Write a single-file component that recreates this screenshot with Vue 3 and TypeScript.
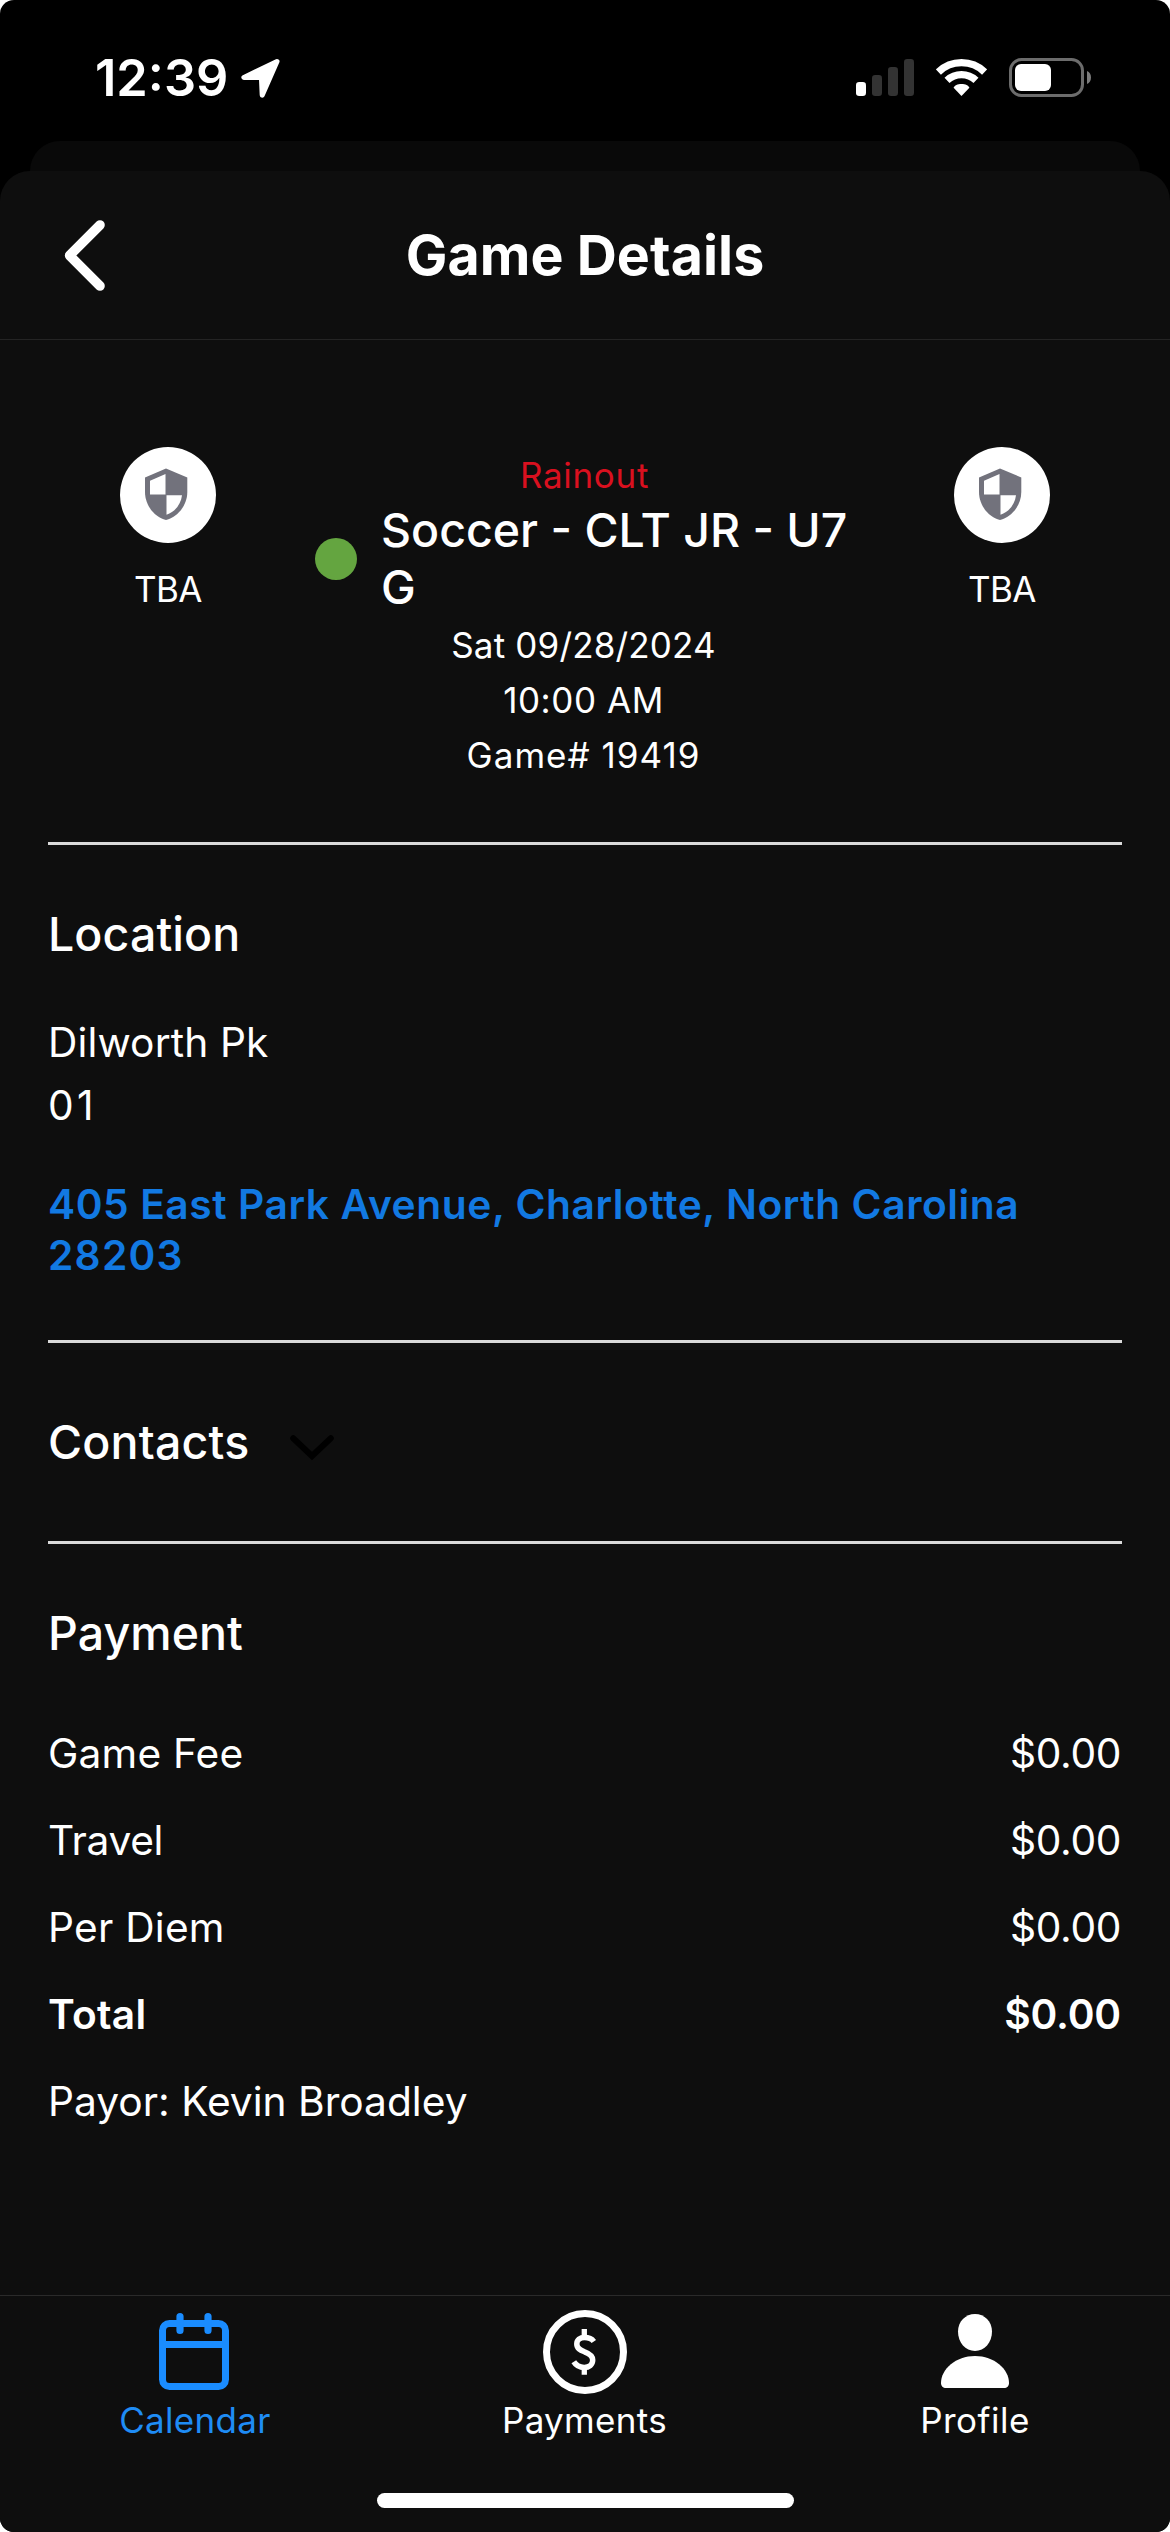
<script setup lang="ts">
interface Fee {
  label: string
  amount: string
  total?: boolean
  tracking: string
}

const fees: Fee[] = [
  { label: 'Game Fee', amount: '$0.00', tracking: '0.18px' },
  { label: 'Travel', amount: '$0.00', tracking: '-0.34px' },
  { label: 'Per Diem', amount: '$0.00', tracking: '0.24px' },
  { label: 'Total', amount: '$0.00', total: true, tracking: '0.25px' },
]

const signalBars = [
  { x: 0, h: 14, on: true },
  { x: 16, h: 21, on: false },
  { x: 32, h: 29, on: false },
  { x: 48, h: 37, on: false },
]
</script>

<template>
  <div class="phone">
    <div class="status">
      <div class="clock">
        <span class="time">12:39</span>
        <svg class="arrow" width="39" height="39" viewBox="0 0 39 39">
          <path d="M36 2.6 2.9 18.4H20.4L21.2 36.2Z" fill="#fff" stroke="#fff" stroke-width="5" stroke-linejoin="round" />
        </svg>
      </div>
      <div class="indicators">
        <svg width="58" height="37" viewBox="0 0 58 37">
          <rect
            v-for="bar in signalBars"
            :key="bar.x"
            :x="bar.x"
            :y="37 - bar.h"
            width="10"
            :height="bar.h"
            rx="3.2"
            :fill="bar.on ? '#fff' : '#333'"
          />
        </svg>
        <svg width="51" height="37" viewBox="0 0 51 37">
          <g fill="none" stroke="#fff" stroke-width="7.3">
            <path d="M2.4 13A33.3 33.3 0 0 1 48.6 13" />
            <path d="M11 21.4A21.3 21.3 0 0 1 40 21.4" />
          </g>
          <path d="M25.5 37 17.6 28.8C18.4 26.4 21.6 25 25.5 25S32.600 26.400 33.400 28.800Z" fill="#fff" />
        </svg>
        <svg width="82" height="39" viewBox="0 0 82 39">
          <rect x="1.5" y="1.500" width="72" height="36" rx="11" fill="none" stroke="#6c6c6c" stroke-width="3" />
          <rect x="6" y="6" width="36" height="27" rx="6" fill="#fff" />
          <path d="M78 13C80.600 14 82 16.500 82 19.500S80.600 25 78 26Z" fill="#7c7c7c" />
        </svg>
      </div>
    </div>

    <div class="sheet-behind"></div>

    <main class="sheet">
      <header class="header">
        <svg class="back" width="41" height="71" viewBox="0 0 41 71">
          <path d="M36 5 5.600 35.500 36 66" fill="none" stroke="#fff" stroke-width="9.600" stroke-linecap="round" stroke-linejoin="round" />
        </svg>
        <h1 class="title">Game Details</h1>
      </header>

      <div class="content">
        <section class="summary">
          <div class="team">
            <svg class="crest" width="96" height="96" viewBox="0 0 96 96">
              <circle cx="48" cy="48" r="48" fill="#fff" />
              <path d="M46 21.500 67.300 30.500V45C67.300 58 58 70 46 73 34 70 25 58 25 45V30.500Z" fill="#72727c" />
              <path d="M45.500 27 30 33.700V47.500H45.500ZM46.500 48.200H62C61 57 55 65 46.500 67.800Z" fill="#fff" />
            </svg>
            <span class="team-name">TBA</span>
          </div>

          <div class="match">
            <span class="state">Rainout</span>
            <div class="league">
              <i class="dot"></i>
              <span class="league-name">Soccer - CLT JR - U7 G</span>
            </div>
            <span class="line date">Sat 09/28/2024</span>
            <span class="line hour">10:00 AM</span>
            <span class="line number">Game# 19419</span>
          </div>

          <div class="team">
            <svg class="crest" width="96" height="96" viewBox="0 0 96 96">
              <circle cx="48" cy="48" r="48" fill="#fff" />
              <path d="M46 21.500 67.300 30.500V45C67.300 58 58 70 46 73 34 70 25 58 25 45V30.500Z" fill="#72727c" />
              <path d="M45.500 27 30 33.700V47.500H45.500ZM46.500 48.200H62C61 57 55 65 46.500 67.800Z" fill="#fff" />
            </svg>
            <span class="team-name">TBA</span>
          </div>
        </section>

        <section class="location">
          <h2>Location</h2>
          <p class="venue">Dilworth Pk</p>
          <p class="field">01</p>
          <a class="address">405 East Park Avenue, Charlotte, North Carolina <span class="zip">28203</span></a>
        </section>

        <section class="contacts">
          <h2 class="contacts-title">Contacts</h2>
          <svg class="expand" width="44" height="26" viewBox="0 0 44 26">
            <path d="M3.200 3.200 22 21 40.800 3.200" fill="none" stroke="#000" stroke-width="6" stroke-linecap="round" />
          </svg>
        </section>

        <section class="payment">
          <h2>Payment</h2>
          <div class="fees">
            <div v-for="fee in fees" :key="fee.label" class="fee" :class="{ total: fee.total }">
              <span :style="{ letterSpacing: fee.tracking }">{{ fee.label }}</span>
              <span class="amount">{{ fee.amount }}</span>
            </div>
            <div class="fee">Payor: Kevin Broadley</div>
          </div>
        </section>
      </div>

      <nav class="tabs">
        <div class="tab active">
          <div class="icon">
            <svg class="calendar" width="70" height="77" viewBox="0 0 70 77">
              <g fill="none" stroke="#1a8cff" stroke-width="7">
                <rect x="3.500" y="10.500" width="63" height="63" rx="7" />
                <path d="M3 31.500H67" />
                <path d="M21 3.600V17.500M49 3.600V17.500" stroke-width="7.200" stroke-linecap="round" />
              </g>
            </svg>
          </div>
          <span>Calendar</span>
        </div>
        <div class="tab payments">
          <div class="icon">
            <svg width="84" height="84" viewBox="0 0 84 84">
              <circle cx="42" cy="42" r="38.500" fill="none" stroke="#fff" stroke-width="7" />
              <path d="M41.300 19V27M41.300 57V64.700" stroke="#fff" stroke-width="5.300" />
              <path
                d="M50.800 31.500C48.900 28.900 45.500 27.600 41.500 27.600 37 27.600 33.800 29.900 33.800 34 33.800 38.300 37 40 41.500 41.800 46.500 43.600 49.700 45.600 49.700 50 49.700 54.800 46 57.400 41.200 57.400 36.500 57.400 33 55.400 30.800 51.800"
                fill="none"
                stroke="#fff"
                stroke-width="5.500"
              />
            </svg>
          </div>
          <span>Payments</span>
        </div>
        <div class="tab profile">
          <div class="icon">
            <svg class="person" width="68" height="74" viewBox="0 0 68 74" fill="#fff">
              <path d="M34 0C43.500 0 51 7.500 51 17.500 51 28.500 43.500 37 34 37S17 28.500 17 17.500C17 7.500 24.500 0 34 0Z" />
              <path d="M34 42C53 42 68 55 68 69 68 72 66 74 63 74H5C2 74 0 72 0 69 0 55 15 42 34 42Z" />
            </svg>
          </div>
          <span>Profile</span>
        </div>
      </nav>
      <div class="home-indicator"></div>
    </main>
  </div>
</template>

<style>
body {
  margin: 0;
  background: #fff;
}
</style>

<style scoped>
.phone {
  box-sizing: border-box;
  width: 1170px;
  height: 2532px;
  display: flex;
  flex-direction: column;
  overflow: hidden;
  border-radius: 14px;
  background: #000;
  color: #fff;
  font-family: Inter, sans-serif;
}

svg {
  display: block;
  flex: none;
}

h1,
h2,
p {
  margin: 0;
}

.status {
  box-sizing: border-box;
  height: 141px;
  padding: 14px 79px 0 95px;
  display: flex;
  align-items: center;
  justify-content: space-between;
}

.clock {
  display: flex;
  align-items: center;
  gap: 13px;
}

.time {
  font-size: 50.5px;
  font-weight: 600;
  line-height: 60px;
}

.arrow {
  margin-top: 2px;
}

.indicators {
  display: flex;
  align-items: center;
  gap: 22px;
}

.sheet-behind {
  height: 30px;
  margin: 0 30px;
  border-radius: 30px 30px 0 0;
  background: #090909;
}

.sheet {
  flex: 1;
  min-height: 0;
  display: flex;
  flex-direction: column;
  border-radius: 30px 30px 0 0;
  background: #0e0e0e;
}

.header {
  height: 168px;
  display: grid;
  grid-template-columns: 200px 1fr 200px;
  align-items: center;
  border-bottom: 1px solid #242424;
}

.back {
  margin-left: 64px;
}

.title {
  font-size: 55.5px;
  font-weight: 700;
  line-height: 68px;
  text-align: center;
  letter-spacing: 0.06px;
}

.content {
  flex: 1;
  padding: 0 48px;
}

.content > section {
  box-sizing: border-box;
}

.content > section:not(:last-child) {
  border-bottom: 3px solid #dadada;
}

h2 {
  font-size: 46.5px;
  font-weight: 500;
  line-height: 56px;
  letter-spacing: 0.08px;
}

.summary {
  height: 505px;
  display: grid;
  grid-template-columns: 240px 594px 240px;
}

.team {
  padding-top: 107px;
  display: flex;
  flex-direction: column;
  align-items: center;
}

.team-name {
  margin-top: 25px;
  font-size: 35px;
  line-height: 42px;
  letter-spacing: -0.6px;
}

.match {
  padding: 114px 3px 0 0;
  display: flex;
  flex-direction: column;
  align-items: center;
  font-size: 35px;
}

.state {
  line-height: 42px;
  letter-spacing: 0.69px;
  color: #d9101f;
  padding-left: 2px;
}

.league {
  align-self: stretch;
  margin: 6px 0 2px 27px;
  display: flex;
  align-items: center;
  gap: 24px;
}

.dot {
  flex: none;
  width: 42px;
  height: 42px;
  border-radius: 50%;
  background: #64a540;
}

.league-name {
  width: 484px;
  font-size: 46.5px;
  font-weight: 500;
  line-height: 57px;
}

.line {
  line-height: 55px;
}

.date {
  letter-spacing: 0.17px;
}

.hour {
  letter-spacing: 0.56px;
}

.number {
  letter-spacing: 1.01px;
}

.location {
  height: 498px;
  padding-top: 61px;
}

.venue,
.field {
  font-size: 40.7px;
  line-height: 63px;
}

.venue {
  margin-top: 49px;
  letter-spacing: 0.12px;
}

.field {
  letter-spacing: 3.3px;
}

.address {
  display: block;
  margin-top: 42px;
  font-size: 40.7px;
  font-weight: 600;
  line-height: 51px;
  letter-spacing: 0.59px;
  color: #1279e2;
}

.zip {
  letter-spacing: 1.25px;
}

.contacts {
  height: 201px;
  display: flex;
  align-items: center;
}

.contacts-title {
  letter-spacing: 0.18px;
}

.expand {
  margin: 12px 0 0 41px;
}

.payment {
  padding-top: 61px;
}

.fees {
  margin-top: 49px;
}

.fee {
  display: flex;
  justify-content: space-between;
  padding-right: 1px;
  font-size: 40.7px;
  line-height: 87px;
}

.amount {
  letter-spacing: -0.37px;
}

.total {
  font-weight: 600;
}

.total .amount {
  letter-spacing: -0.21px;
}

.tabs {
  height: 197px;
  display: grid;
  grid-template-columns: repeat(3, 1fr);
  border-top: 1px solid #2a2a2a;
}

.tab {
  padding-top: 14px;
  display: flex;
  flex-direction: column;
  align-items: center;
  font-size: 35px;
  line-height: 42px;
  letter-spacing: 0.32px;
}

.icon {
  height: 84px;
  margin-bottom: 5px;
}

.active {
  color: #1f8cf5;
}

.calendar {
  margin: 3px 2px 0 0;
}

.payments {
  padding-right: 1px;
}

.profile {
  letter-spacing: 0.49px;
}

.person {
  margin: 4px 1px 0 0;
}

.home-indicator {
  width: 417px;
  height: 15px;
  margin: 0 auto 24px;
  flex: none;
  border-radius: 8px;
  background: #fff;
}
</style>
